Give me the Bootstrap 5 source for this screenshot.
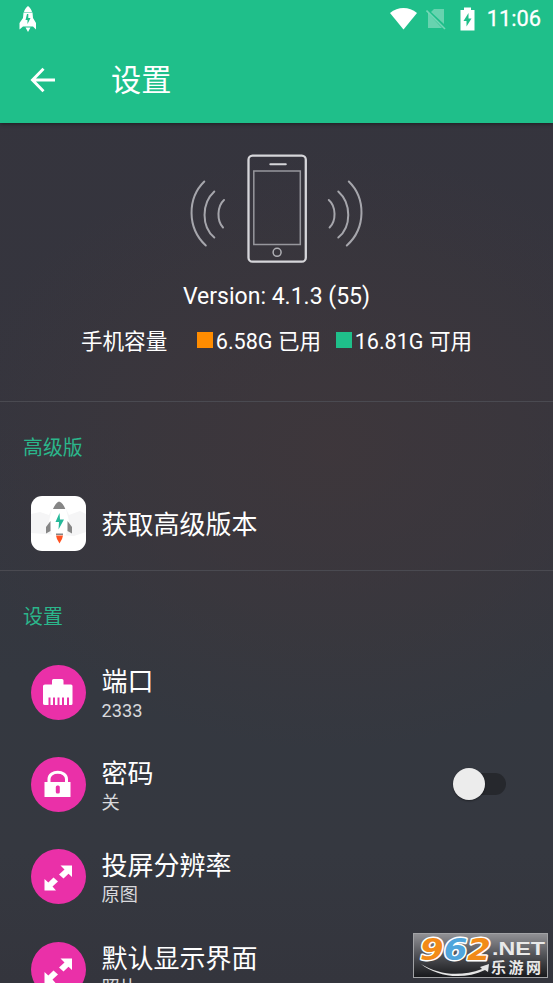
<!DOCTYPE html>
<html lang="zh-CN">
<head>
<meta charset="utf-8">
<meta name="viewport" content="width=device-width, initial-scale=1">
<title>设置</title>
<link href="https://cdn.jsdelivr.net/npm/bootstrap@5.3.0/dist/css/bootstrap.min.css" rel="stylesheet">
<style>
html,body{height:983px;overflow:hidden}
body{font-family:Roboto,"Noto Sans CJK SC",sans-serif;color:#fff;background:#34373f}
svg{display:block;flex:none}
.screen{height:983px;background:
 radial-gradient(ellipse 380px 300px at 330px 450px,rgba(63,55,59,.85),rgba(63,55,59,.5) 50%,rgba(63,55,59,0)),
 linear-gradient(180deg,#35343d 0,#35353e 420px,#343840 680px,#353840 850px,#34353d 983px)}
.top{height:123px;background:#1fbf8a;box-shadow:0 1px 4px rgba(0,0,0,.45)}
.status{height:37px;padding:0 12px 0 18px}
.sim{margin-left:9px}
.batt{margin-left:13px}
.clock{font-size:21.8px;line-height:37px;margin-left:11.500px;-webkit-text-stroke:.3px #fff}
.bar{height:86px;padding-left:29px}
.bar h1{font-size:30.2px;line-height:40px;font-weight:400;margin:2px 0 0 54px}
.hero{height:279px;padding-top:25px}
.ver{font-size:23px;line-height:30px;margin-top:14px}
.cap{font-size:21.6px;line-height:30px;margin-top:15px}
.sq{width:16px;height:16px;margin-right:2.5px;margin-top:-5px}
.used{margin-left:30px}.free{margin-left:15px}
.orange{background:#ff8c00}.green{background:#1fbf8a}
.rule{border-bottom:1px solid #4a4a51}
.adv{height:169px}
.sec{font-size:19.9px;line-height:30px;color:#2bb68b;padding:32px 0 0 23px}
.item{height:92.3px;padding-left:31px}
.adv .item{height:92px;margin-top:13px}
.first{margin-top:13px}
.name{font-size:26px;line-height:34px}
.sub{font-size:18.2px;line-height:24px;color:#d8d9dc}
.words{margin-left:15.5px;padding-top:3px}
.sw{width:53px;height:32px;margin-right:47px}
.track{width:45px;height:22px;border-radius:11px;background:#26282d;margin-left:8px}
.knob{width:32px;height:32px;border-radius:50%;background:#ececec;left:0;top:0;box-shadow:0 1px 2px rgba(0,0,0,.4)}
.logo{left:413px;top:933px}
</style>
<script src="https://cdn.jsdelivr.net/npm/bootstrap@5.3.0/dist/js/bootstrap.bundle.min.js"></script>
</head>
<body>
<main class="screen position-relative overflow-hidden">
<header class="top position-relative">
 <div class="status d-flex align-items-center">
  <svg width="20" height="28" viewBox="0 0 20 28"><path fill="#fff" d="M10 1C12 2.500 13.500 4.500 14 7H6C6.500 4.500 8 2.500 10 1ZM5.500 7.500H14.500L15 13 18 18V24.500L15 21.500H5L1.500 24.500V18L5 13ZM7.500 22.500H12.500L10 27Z"/><path fill="#1fbf8a" d="M9 9L7.500 15H9.500V19L12.500 13H10.300V9Z"/></svg>
  <svg class="ms-auto" width="27" height="22" viewBox="0 0 27 22"><path fill="#fff" d="M0 5C8-1.600 19-1.600 27 5L13.500 21.500Z"/></svg>
  <svg class="sim" width="21" height="22" viewBox="0 0 21 22"><path fill="#fff" fill-opacity=".32" d="M8 1H18V16L5 4ZM2 5L16 20H2Z"/><path d="M.5 2.500L19 21" stroke="#fff" stroke-opacity=".38" stroke-width="1.600"/></svg>
  <svg class="batt" width="15" height="24" viewBox="0 0 15 24"><path fill="#fff" d="M4 .5H11V3H14.500V23.500H.5V3H4Z"/><path fill="#1fbf8a" d="M8.500 6L3.500 14H6.500V19.500L11.500 11.500H8.500Z"/></svg>
  <div class="clock">11:06</div>
 </div>
 <div class="bar d-flex align-items-center">
  <svg width="28" height="26" viewBox="0 0 28 26" fill="none" stroke="#fff" stroke-width="2.900"><path d="M26 13H4M14.500 1.800L3.500 13 14.500 24.200"/></svg>
  <h1>设置</h1>
 </div>
</header>
<section class="hero rule d-flex flex-column align-items-center">
 <svg width="195" height="120" viewBox="179.200 148 195 120" fill="none" stroke-linecap="round">
  <rect x="248.700" y="155.700" width="57.300" height="106" rx="4" stroke="#d6d6da" stroke-width="2.300"/>
  <rect x="254" y="171" width="46.500" height="73.500" stroke="#97979d" stroke-width="1.500"/>
  <path d="M270.500 164.300H286" stroke="#d6d6da" stroke-width="2"/>
  <circle cx="277.300" cy="252.300" r="4" stroke="#b0b0b5" stroke-width="1.500"/>
  <g stroke="#a6a6ac" stroke-width="2"><path d="M204.500 181.500C187.500 198 187 228 206 245.500M214.500 191.500C201.500 203.500 201.500 226.500 214.500 237.500M224.200 200C217 206.500 217 221 223.200 227.500"/><path d="M349 181.500C366 198 366.500 228 347 245.500M338.500 191.500C351.800 203.500 351.800 226.500 338.500 237.500M329 200C336.500 206.500 336.500 221 329.800 227.500"/></g>
 </svg>
 <div class="ver">Version: 4.1.3 (55)</div>
 <div class="cap d-flex align-items-center"><span>手机容量</span><span class="sq orange used"></span><span>6.58G 已用</span><span class="sq green free"></span><span>16.81G 可用</span></div>
</section>
<section class="adv rule">
 <div class="sec">高级版</div>
 <div class="item d-flex align-items-center">
  <svg width="55" height="55" viewBox="0 0 55 55"><rect width="55" height="55" rx="11" fill="#fff"/><path fill="#f5f5f6" d="M0 18L9 16 18 19 21 13 35 13 38 19 49 15 55 18V36L43 40 13 38 0 37Z"/><path fill="#fff" d="M21 13H35L38 25 35 39H21L18 25Z"/><path fill="#868686" d="M22 13C23.500 9.500 25.500 6.500 28 5.500C31 6.500 33 9.500 34.300 13ZM19.500 25V35L15 37.500V31ZM36.500 25L41 31V37.500L36.500 35ZM25 37.500H32V39H25Z"/><path fill="#ff5222" d="M25 39.500H32L31 43 28.500 47.500 26 43Z"/><path fill="#26b99a" d="M28.500 17L24.500 26H28L27.500 33.500 33 23.500H29Z"/></svg>
  <div class="words name">获取高级版本</div>
 </div>
</section>
<section>
 <div class="sec">设置</div>
 <div class="item first d-flex align-items-center">
  <svg width="55" height="55" viewBox="0 0 55 55"><circle cx="27.500" cy="27.500" r="27.500" fill="#ea30a8"/><path fill="#fff" d="M14 19.500H21V15.500Q21 14 22.500 14H31Q32.500 14 32.500 15.500V19.500H40Q41.500 19.500 41.500 21V38.500Q41.500 40 40 40H38V32.500H36V40H33V32.500H31V40H28.500V32.500H26.500V40H24V32.500H22V40H19.500V32.500H17.500V40H14Q12 40 12 38.500V21Q12 19.500 14 19.500Z"/></svg>
  <div class="words"><div class="name">端口</div><div class="sub">2333</div></div>
 </div>
 <div class="item d-flex align-items-center">
  <svg width="55" height="55" viewBox="0 0 55 55"><circle cx="27.500" cy="27.500" r="27.500" fill="#ea30a8"/><path d="M18 26V22C18 13 35.500 13 35.500 22V26" fill="none" stroke="#fff" stroke-width="3"/><rect x="13.500" y="25" width="26" height="15" fill="#fff"/><rect x="24.800" y="28.500" width="4" height="8" rx="1.500" fill="#ea30a8"/></svg>
  <div class="words"><div class="name">密码</div><div class="sub">关</div></div>
  <div class="sw position-relative d-flex align-items-center ms-auto"><div class="track"></div><div class="knob position-absolute"></div></div>
 </div>
 <div class="item d-flex align-items-center">
  <svg width="55" height="55" viewBox="0 0 55 55"><circle cx="27.500" cy="27.500" r="27.500" fill="#ea30a8"/><path id="expand" fill="#fff" d="M29.500 16.500H41V28L37.500 24.800 32.500 29.500 28 25.500 33.500 20.500ZM25 41.500H13.500V30L17.300 33.500 22.500 28.500 27 32.500 21.500 37.500Z"/></svg>
  <div class="words"><div class="name">投屏分辨率</div><div class="sub">原图</div></div>
 </div>
 <div class="item d-flex align-items-center">
  <svg width="55" height="55" viewBox="0 0 55 55"><circle cx="27.500" cy="27.500" r="27.500" fill="#ea30a8"/><use href="#expand"/></svg>
  <div class="words"><div class="name">默认显示界面</div><div class="sub">照片</div></div>
 </div>
</section>
<svg class="logo position-absolute" width="135" height="45" viewBox="0 0 135 45">
 <defs><linearGradient id="plate" x2="0" y2="1"><stop stop-color="#929296"/><stop offset=".5" stop-color="#505156"/><stop offset="1" stop-color="#17181b"/></linearGradient></defs>
 <rect x=".5" y=".5" width="134" height="44" fill="url(#plate)" stroke="#a1a2a5"/>
 <path d="M8 31C26 42 47 44 69 36L67 34 76 31 75 39 72 37C49 48 23 43 8 31Z" fill="#e5e5e5"/>
 <text x="7" y="27" font-family="DejaVu Sans, sans-serif" font-weight="700" font-style="italic" font-size="31" stroke="#fff" stroke-width="3" paint-order="stroke" stroke-linejoin="round" textLength="71" lengthAdjust="spacingAndGlyphs"><tspan fill="#f28b18">9</tspan><tspan fill="#50a5dc">6</tspan><tspan fill="#f28b18">2</tspan></text>
 <text x="79" y="21.500" font-family="Liberation Sans, sans-serif" font-weight="700" font-size="17.500" fill="#e9e9e9" textLength="53" lengthAdjust="spacingAndGlyphs">.NET</text>
 <text x="78" y="39.500" font-family="Noto Sans CJK SC, sans-serif" font-weight="700" font-size="15" fill="#e9e9e9" textLength="50">乐游网</text>
</svg>
</main>
</body>
</html>
